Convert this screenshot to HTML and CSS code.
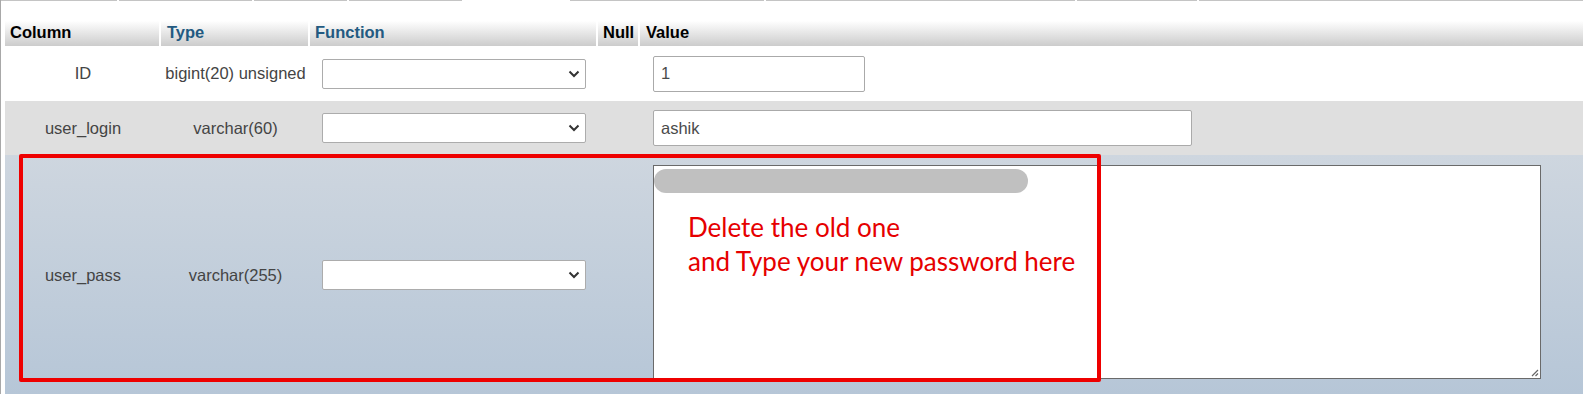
FILE: index.html
```html
<!DOCTYPE html>
<html>
<head>
<meta charset="utf-8">
<link rel="stylesheet" href="styles.css">
</head>
<body>
<div class="page">
  <div class="tabs">
    <span class="tab"></span><span class="tab"></span><span class="tab"></span><span class="tab"></span>
    <span class="tab active"></span><span class="tab"></span><span class="tab"></span><span class="tab"></span><span class="tab"></span>
  </div>

  <div class="grid">
    <div class="row head">
      <div class="th">Column</div>
      <div class="th th-type"><a class="sort">Type</a></div>
      <div class="th"><a class="sort">Function</a></div>
      <div class="th">Null</div>
      <div class="th th-value">Value</div>
    </div>

    <div class="row odd">
      <div class="td center">ID</div>
      <div class="td center">bigint(20) unsigned</div>
      <div class="td func">
        <span class="sel"><select><option></option></select><svg class="chev" width="12" height="8" viewBox="0 0 12 8"><path d="M1.5 1.5 L6 6 L10.5 1.5" fill="none" stroke="#333" stroke-width="2"/></svg></span>
      </div>
      <div class="td"></div>
      <div class="td val"><input class="txt short" type="text" value="1"></div>
    </div>

    <div class="row even">
      <div class="td center">user_login</div>
      <div class="td center">varchar(60)</div>
      <div class="td func">
        <span class="sel"><select><option></option></select><svg class="chev" width="12" height="8" viewBox="0 0 12 8"><path d="M1.5 1.5 L6 6 L10.5 1.5" fill="none" stroke="#333" stroke-width="2"/></svg></span>
      </div>
      <div class="td"></div>
      <div class="td val"><input class="txt long" type="text" value="ashik"></div>
    </div>

    <div class="row marked">
      <div class="td center">user_pass</div>
      <div class="td center">varchar(255)</div>
      <div class="td func">
        <span class="sel"><select><option></option></select><svg class="chev" width="12" height="8" viewBox="0 0 12 8"><path d="M1.5 1.5 L6 6 L10.5 1.5" fill="none" stroke="#333" stroke-width="2"/></svg></span>
      </div>
      <div class="td"></div>
      <div class="td val area-cell">
        <div class="area">
          <div class="blur"></div>
          <p class="note">Delete the old one<br>and Type your new password here</p>
          <svg class="grip" width="10" height="10" viewBox="0 0 10 10"><path d="M9 3 L3 9 M9 6.5 L6.5 9" stroke="#666" stroke-width="1.2"/></svg>
        </div>
      </div>
    </div>
  </div>

  <div class="highlight"></div>
</div>
</body>
</html>
```

FILE: styles.css
```css
html, body {
  margin: 0;
  background: #fff;
}

body {
  font-family: "Liberation Sans", Arial, sans-serif;
  font-size: 16.5px;
  color: #444;
}

.page {
  position: relative;
  height: 394px;
  overflow: hidden;
  border-left: 1px solid #a8a8a8;
  padding-left: 4px;
}

.tabs {
  display: grid;
  grid-template-columns: 116px 133px 93px 113px 104px 194px 309px 120px 1fr;
  column-gap: 2px;
  margin-left: -4px;
  height: 18px;
}

.tab {
  border-top: 1px solid #c4c4c4;
}

.tab.active {
  border-top-color: transparent;
}

.row {
  display: grid;
  grid-template-columns: 156px 149px 288px 42px 1fr;
}

.head {
  height: 28px;
}

.th {
  display: flex;
  align-items: center;
  padding-left: 5px;
  border-right: 2px solid #fff;
  background: linear-gradient(#ffffff 10%, #cccccc);
  font-weight: bold;
  color: #000;
}

.th-type,
.th-value {
  padding-left: 6px;
}

.th-value {
  border-right: 0;
}

.sort {
  color: #235a81;
}

.odd {
  height: 55px;
  background: #fff;
}

.even {
  height: 54px;
  background: #dfdfdf;
}

.marked {
  background: linear-gradient(#ced6df, #b6c6d7);
}

.td {
  display: flex;
  align-items: center;
}

.td.center {
  justify-content: center;
}

.td.func {
  padding-left: 12px;
}

.td.val {
  padding-left: 13px;
}

.td.area-cell {
  padding-top: 10px;
  padding-bottom: 16px;
}

.sel {
  position: relative;
  display: inline-block;
  width: 264px;
  height: 30px;
}

.sel select {
  appearance: none;
  -webkit-appearance: none;
  width: 100%;
  height: 100%;
  margin: 0;
  border: 1px solid #acacac;
  border-radius: 2px;
  background: #fff;
  font: inherit;
}

.chev {
  position: absolute;
  right: 6px;
  top: 11px;
}

.txt {
  box-sizing: border-box;
  height: 36px;
  margin: 0;
  padding: 0 7px;
  border: 1px solid #aaa;
  border-radius: 2px;
  background: #fff;
  font: inherit;
  color: #4a4a4a;
}

.txt.short {
  width: 212px;
}

.txt.long {
  width: 539px;
}

.area {
  position: relative;
  box-sizing: border-box;
  width: 888px;
  height: 214px;
  border: 1px solid #6a6a6a;
  background: #fff;
  padding-top: 3px;
}

.blur {
  width: 374px;
  height: 24px;
  border-radius: 12px;
  background: #c0c0c0;
}

.note {
  margin: 17px 0 0 34px;
  font-family: Lato, "Open Sans", sans-serif;
  font-size: 26px;
  line-height: 34px;
  color: #e60000;
}

.grip {
  position: absolute;
  right: 1px;
  bottom: 1px;
}

.highlight {
  position: absolute;
  left: 18px;
  top: 154px;
  width: 1082px;
  height: 228px;
  box-sizing: border-box;
  border: 4px solid #ee0000;
  border-radius: 2px;
}
```
